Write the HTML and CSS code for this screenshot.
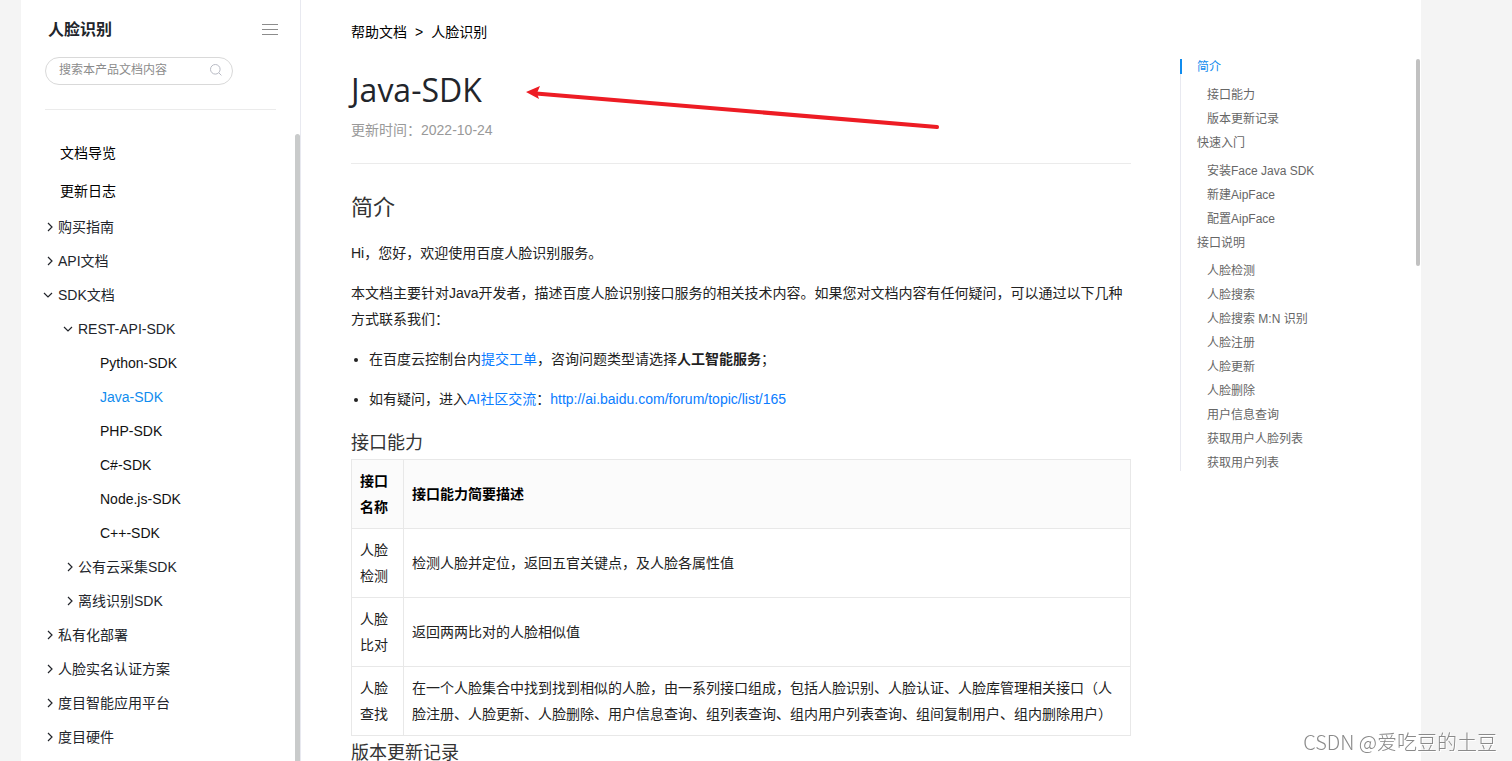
FILE: index.html
```html
<!DOCTYPE html>
<html lang="zh-CN">
<head>
<meta charset="utf-8">
<title>Java-SDK - 人脸识别</title>
<link rel="stylesheet" href="styles.css">
</head>
<body>
<svg class="sprite" aria-hidden="true">
  <symbol id="chev-right" viewBox="0 0 10 10"><path d="M3 1l4 4-4 4"/></symbol>
  <symbol id="chev-down" viewBox="0 0 10 10"><path d="M1 3l4 4 4-4"/></symbol>
</svg>
<div class="page">
  <aside class="sidebar">
    <header class="side-head">
      <div class="side-title-row">
        <h2 class="side-title">人脸识别</h2>
        <button class="menu-btn" type="button" aria-label="收起目录">
          <svg width="16" height="12" viewBox="0 0 16 12"><path d="M0 .5h16M0 5.5h16M0 10.5h16"/></svg>
        </button>
      </div>
      <form class="search">
        <input class="search-input" type="text" placeholder="搜索本产品文档内容" aria-label="搜索本产品文档内容">
        <button class="search-btn" type="button" aria-label="搜索">
          <svg width="12" height="12" viewBox="0 0 12 12"><circle cx="5.3" cy="5.3" r="4.8"/><path d="M8.8 8.8l2.6 2.6"/></svg>
        </button>
      </form>
    </header>
    <nav class="tree" aria-label="文档目录">
      <a class="doc" href="#">文档导览</a>
      <a class="doc" href="#">更新日志</a>
      <a class="node" href="#"><svg class="chev"><use href="#chev-right"/></svg>购买指南</a>
      <a class="node" href="#"><svg class="chev"><use href="#chev-right"/></svg>API文档</a>
      <a class="node open" href="#"><svg class="chev"><use href="#chev-down"/></svg>SDK文档</a>
      <div class="branch">
        <a class="node open" href="#"><svg class="chev"><use href="#chev-down"/></svg>REST-API-SDK</a>
        <div class="leaves">
          <a class="leaf" href="#">Python-SDK</a>
          <a class="leaf active" href="#">Java-SDK</a>
          <a class="leaf" href="#">PHP-SDK</a>
          <a class="leaf" href="#">C#-SDK</a>
          <a class="leaf" href="#">Node.js-SDK</a>
          <a class="leaf" href="#">C++-SDK</a>
        </div>
        <a class="node" href="#"><svg class="chev"><use href="#chev-right"/></svg>公有云采集SDK</a>
        <a class="node" href="#"><svg class="chev"><use href="#chev-right"/></svg>离线识别SDK</a>
      </div>
      <a class="node" href="#"><svg class="chev"><use href="#chev-right"/></svg>私有化部署</a>
      <a class="node" href="#"><svg class="chev"><use href="#chev-right"/></svg>人脸实名认证方案</a>
      <a class="node" href="#"><svg class="chev"><use href="#chev-right"/></svg>度目智能应用平台</a>
      <a class="node" href="#"><svg class="chev"><use href="#chev-right"/></svg>度目硬件</a>
    </nav>
  </aside>

  <main class="content">
    <nav class="crumbs" aria-label="面包屑"><a href="#">帮助文档</a><span>&gt;</span><a href="#">人脸识别</a></nav>
    <header class="doc-head">
      <h1 class="doc-title">Java-SDK</h1>
      <p class="updated">更新时间：2022-10-24</p>
    </header>
    <article class="article">
      <h2>简介</h2>
      <p>Hi，您好，欢迎使用百度人脸识别服务。</p>
      <p>本文档主要针对Java开发者，描述百度人脸识别接口服务的相关技术内容。如果您对文档内容有任何疑问，可以通过以下几种方式联系我们：</p>
      <ul>
        <li>在百度云控制台内<a href="#">提交工单</a>，咨询问题类型请选择<strong>人工智能服务</strong>；</li>
        <li>如有疑问，进入<a href="#">AI社区交流</a>：<a href="#">http://ai.baidu.com/forum/topic/list/165</a></li>
      </ul>
      <h3>接口能力</h3>
      <table>
        <thead>
          <tr><th class="name" scope="col">接口名称</th><th scope="col">接口能力简要描述</th></tr>
        </thead>
        <tbody>
          <tr><td>人脸检测</td><td>检测人脸并定位，返回五官关键点，及人脸各属性值</td></tr>
          <tr><td>人脸比对</td><td>返回两两比对的人脸相似值</td></tr>
          <tr><td>人脸查找</td><td>在一个人脸集合中找到找到相似的人脸，由一系列接口组成，包括人脸识别、人脸认证、人脸库管理相关接口（人脸注册、人脸更新、人脸删除、用户信息查询、组列表查询、组内用户列表查询、组间复制用户、组内删除用户）</td></tr>
        </tbody>
      </table>
      <h3>版本更新记录</h3>
    </article>
    <svg class="arrow" width="416" height="44" viewBox="0 0 416 44" aria-hidden="true">
      <path class="shaft" d="M10 7.500L411 41"/>
      <path class="head" d="M0 6L14 0L11 7L13 13Z"/>
    </svg>
  </main>

  <aside class="toc-wrap">
    <nav class="toc" aria-label="本页目录">
      <a class="active" href="#">简介</a>
      <div class="sub">
        <a href="#">接口能力</a>
        <a href="#">版本更新记录</a>
      </div>
      <a href="#">快速入门</a>
      <div class="sub">
        <a href="#">安装Face Java SDK</a>
        <a href="#">新建AipFace</a>
        <a href="#">配置AipFace</a>
      </div>
      <a href="#">接口说明</a>
      <div class="sub">
        <a href="#">人脸检测</a>
        <a href="#">人脸搜索</a>
        <a href="#">人脸搜索 M:N 识别</a>
        <a href="#">人脸注册</a>
        <a href="#">人脸更新</a>
        <a href="#">人脸删除</a>
        <a href="#">用户信息查询</a>
        <a href="#">获取用户人脸列表</a>
        <a href="#">获取用户列表</a>
      </div>
    </nav>
  </aside>
</div>
<div class="watermark">CSDN @爱吃豆的土豆</div>
</body>
</html>
```
FILE: styles.css
```css
* { box-sizing: border-box; }

body {
  margin: 0;
  height: 100vh;
  overflow: hidden;
  background: #f4f4f4;
  color: #222;
  font: 14px/26px "Liberation Sans", "Noto Sans CJK SC", sans-serif;
  text-spacing-trim: space-all;
}

a { color: inherit; text-decoration: none; }
h1, h2, h3, p, ul { margin: 0; padding: 0; font-weight: 400; }
button { padding: 0; border: 0; background: none; display: flex; }
svg { fill: none; flex: none; }
.sprite { position: absolute; width: 0; height: 0; }

.page {
  display: flex;
  min-height: 100vh;
  margin: 0 91px 0 21px;
  background: #fff;
}

/* Sidebar */
.sidebar {
  position: relative;
  flex: none;
  width: 280px;
  border-right: 1px solid #e8e9f0;
}
.sidebar::after {
  content: "";
  position: absolute;
  top: 134px;
  right: 0;
  bottom: 0;
  width: 5px;
  border-radius: 3px 3px 0 0;
  background: #c9cbcb;
}
.side-head {
  margin: 0 24px;
  padding: 22px 0 24px;
  border-bottom: 1px solid #ebebeb;
}
.side-title-row {
  display: flex;
  justify-content: space-between;
  align-items: center;
  margin: 0 -2px 0 3px;
  height: 16px;
}
.side-title {
  color: #22252b;
  font-size: 16px;
  line-height: 16px;
  font-weight: 700;
}
.menu-btn { stroke: #8c8c8c; }
.search {
  display: flex;
  align-items: center;
  width: 188px;
  height: 28px;
  margin-top: 19px;
  padding: 0 10px 2px 13px;
  border: 1px solid #d9d9d9;
  border-radius: 14px;
}
.search-input {
  flex: 1;
  min-width: 0;
  padding: 0;
  border: 0;
  outline: 0;
  background: none;
  font: 12px/18px "Liberation Sans", "Noto Sans CJK SC", sans-serif;
}
.search-input::placeholder { color: #8c8c8c; }
.search-btn { stroke: #b8bac4; }

.tree { padding: 24px 24px 0 22px; }
.tree a { display: flex; align-items: center; }
.doc { height: 38px; padding-left: 17px; color: #000; }
.node { height: 34px; gap: 3px; padding-left: 2px; color: #22252b; }
.node.open { gap: 5px; padding-left: 0; }
.chev { width: 10px; height: 10px; stroke: #22252b; stroke-width: 1.2; }
.branch { padding-left: 20px; }
.leaves { padding-left: 37px; }
.leaf { height: 34px; color: #111; }
.leaf.active { color: #108cee; }

/* Main column */
.content {
  position: relative;
  flex: 1;
  min-width: 0;
  padding: 20px 49px 0 50px;
}
.crumbs { display: flex; gap: 8px; line-height: 24px; color: #000; }
.doc-head {
  margin: 22px 0 26px;
  padding-bottom: 23px;
  border-bottom: 1px solid #ebebeb;
}
.doc-title {
  color: #22252b;
  font: 400 32px/48px "Open Sans", "Noto Sans", sans-serif;
}
.updated { margin-top: 6px; line-height: 20px; color: #999; }
.article h2 { font-size: 22px; line-height: 36px; color: #333; }
.article h3 { padding-top: 2px; font-size: 18px; line-height: 31px; color: #333; }
.article p, .article li { margin: 14px 0; }
.article ul { padding-left: 18px; }
.article ul a { color: #0a7cff; }

table {
  width: 100%;
  border-collapse: collapse;
}
th, td {
  padding: 8px;
  border: 1px solid #e8e8e8;
  text-align: left;
}
th { background: #fbfbfb; color: #000; }
.name { width: 52px; }

.arrow { position: absolute; left: 225px; top: 86px; }
.shaft { stroke: #ed1c24; stroke-width: 4; stroke-linecap: round; }
.head { fill: #ed1c24; }

/* Page outline */
.toc-wrap {
  position: relative;
  flex: none;
  width: 241px;
  padding-top: 59px;
}
.toc-wrap::after {
  content: "";
  position: absolute;
  top: 59px;
  right: 1px;
  width: 4px;
  height: 207px;
  border-radius: 2px;
  background: #c1c1c1;
}
.toc {
  position: relative;
  display: flex;
  flex-direction: column;
  gap: 8px;
  padding-left: 16px;
  border-left: 1px solid #e8e9f0;
  color: #666;
  font-size: 12px;
  line-height: 16px;
}
.toc .active { color: #108cee; }
.toc .active::before {
  content: "";
  position: absolute;
  top: 0;
  left: -1px;
  width: 2px;
  height: 15px;
  background: #108cee;
}
.sub {
  display: flex;
  flex-direction: column;
  gap: 8px;
  padding: 4px 0 0 10px;
}

.watermark {
  position: fixed;
  right: 15px;
  bottom: 4px;
  color: #8a8a8a;
  font: 300 20px/30px "Noto Sans CJK SC", sans-serif;
  text-shadow: 1px 1px 0 #fff;
}
```
